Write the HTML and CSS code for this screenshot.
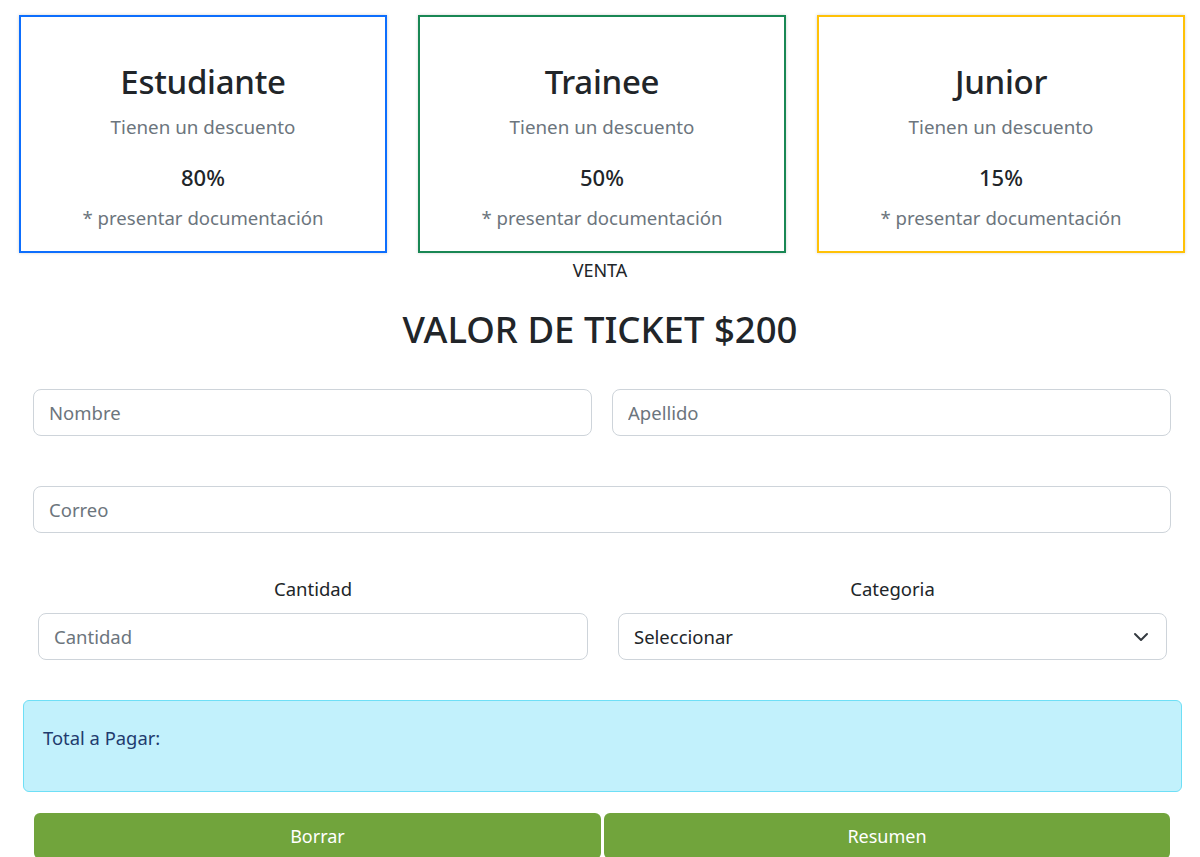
FILE: index.html
```html
<!DOCTYPE html>
<html lang="es">
<head>
<meta charset="utf-8">
<title>Venta de tickets</title>
<link rel="stylesheet" href="styles.css">
</head>
<body>
<section class="cards">
  <div class="card card-blue">
    <h2 class="card-title">Estudiante</h2>
    <p class="card-sub">Tienen un descuento</p>
    <p class="card-pct">80%</p>
    <p class="card-note">* presentar documentación</p>
  </div>
  <div class="card card-green">
    <h2 class="card-title">Trainee</h2>
    <p class="card-sub">Tienen un descuento</p>
    <p class="card-pct">50%</p>
    <p class="card-note">* presentar documentación</p>
  </div>
  <div class="card card-yellow">
    <h2 class="card-title">Junior</h2>
    <p class="card-sub">Tienen un descuento</p>
    <p class="card-pct">15%</p>
    <p class="card-note">* presentar documentación</p>
  </div>
</section>
<p class="venta">VENTA</p>
<h1 class="ticket">VALOR DE TICKET $200</h1>
<form class="form">
  <div class="row-two">
    <input class="field" type="text" placeholder="Nombre">
    <input class="field" type="text" placeholder="Apellido">
  </div>
  <div class="row-one">
    <input class="field" type="email" placeholder="Correo">
  </div>
  <div class="row-labels">
    <div class="group">
      <label class="lbl">Cantidad</label>
      <input class="field" type="text" placeholder="Cantidad">
    </div>
    <div class="group">
      <label class="lbl">Categoria</label>
      <div class="select">
        <span>Seleccionar</span>
        <svg class="chev" width="16" height="16" viewBox="0 0 16 16"><path d="M2 5l6 6 6-6" fill="none" stroke="#343a40" stroke-width="2" stroke-linecap="round" stroke-linejoin="round"/></svg>
      </div>
    </div>
  </div>
  <div class="alert">Total a Pagar:</div>
  <div class="buttons">
    <button type="button" class="btn">Borrar</button>
    <button type="button" class="btn">Resumen</button>
  </div>
</form>
</body>
</html>
```
FILE: styles.css
```css
* { box-sizing: border-box; }
html, body { margin: 0; padding: 0; }
body {
  font-family: "Noto Sans", "Open Sans", sans-serif;
  color: #212529;
  background: #fff;
  font-size: 16px;
  line-height: 1.5;
  width: 1200px;
  height: 857px;
  overflow: hidden;
}
p, h1, h2 { margin: 0; }

.cards {
  display: grid;
  grid-template-columns: repeat(3, 368px);
  column-gap: 31px;
  padding: 15px 0 0 19px;
}
.card {
  height: 238px;
  border: 2px solid;
  box-shadow: 0 0 3px rgba(0,0,0,0.18);
  text-align: center;
  padding-top: 46px;
}
.card-blue { border-color: #0d6efd; }
.card-green { border-color: #198754; }
.card-yellow { border-color: #ffc107; }
.card-title {
  font-size: 33px;
  font-weight: 500;
  line-height: 38px;
  letter-spacing: -0.3px;
}
.card-sub {
  margin-top: 13px;
  font-size: 18.8px;
  line-height: 27px;
  color: #6c757d;
}
.card-pct {
  margin-top: 23px;
  font-size: 22px;
  font-weight: 500;
  line-height: 26px;
}
.card-note {
  margin-top: 14px;
  font-size: 18.6px;
  line-height: 27px;
  color: #6c757d;
}

.venta {
  margin-top: 5px;
  text-align: center;
  line-height: 24px;
  font-size: 18px;
}
.ticket {
  margin-top: 26px;
  text-align: center;
  font-size: 36.5px;
  font-weight: 500;
  line-height: 43px;
}

.form { padding: 0; }
.row-two {
  margin: 38px 29px 0 33px;
  display: grid;
  grid-template-columns: 1fr 1fr;
  column-gap: 20px;
}
.row-one {
  margin: 50px 29px 0 33px;
  display: grid;
}
.field {
  height: 47px;
  width: 100%;
  border: 1px solid #ced4da;
  border-radius: 8px;
  padding: 0 15px;
  font-family: inherit;
  font-size: 18.5px;
  color: #212529;
  background: #fff;
  outline: none;
}
.field::placeholder { color: #6c757d; }

.row-labels {
  margin: 44px 33px 0 38px;
  display: grid;
  grid-template-columns: 550px 549px;
  column-gap: 30px;
}
.group { display: flex; flex-direction: column; }
.lbl {
  text-align: center;
  line-height: 24px;
  font-size: 18.5px;
  margin-bottom: 12px;
}
.select {
  height: 47px;
  border: 1px solid #ced4da;
  border-radius: 8px;
  padding: 0 17px 0 15px;
  display: flex;
  align-items: center;
  justify-content: space-between;
  font-size: 18.5px;
}
.chev { display: block; }

.alert {
  margin: 40px 18px 0 23px;
  height: 92px;
  background: #c2f1fc;
  border: 1px solid #6edff6;
  border-radius: 6px;
  color: #1f3c6e;
  padding: 25px 19px;
  font-size: 18.4px;
  line-height: 24px;
}

.buttons {
  margin: 21px 30px 0 34px;
  display: grid;
  grid-template-columns: 567px 566px;
  column-gap: 3px;
}
.btn {
  height: 46px;
  border: none;
  border-radius: 6px;
  background: #71a43c;
  color: #fff;
  font-family: inherit;
  font-size: 18px;
  padding: 0;
}
```
